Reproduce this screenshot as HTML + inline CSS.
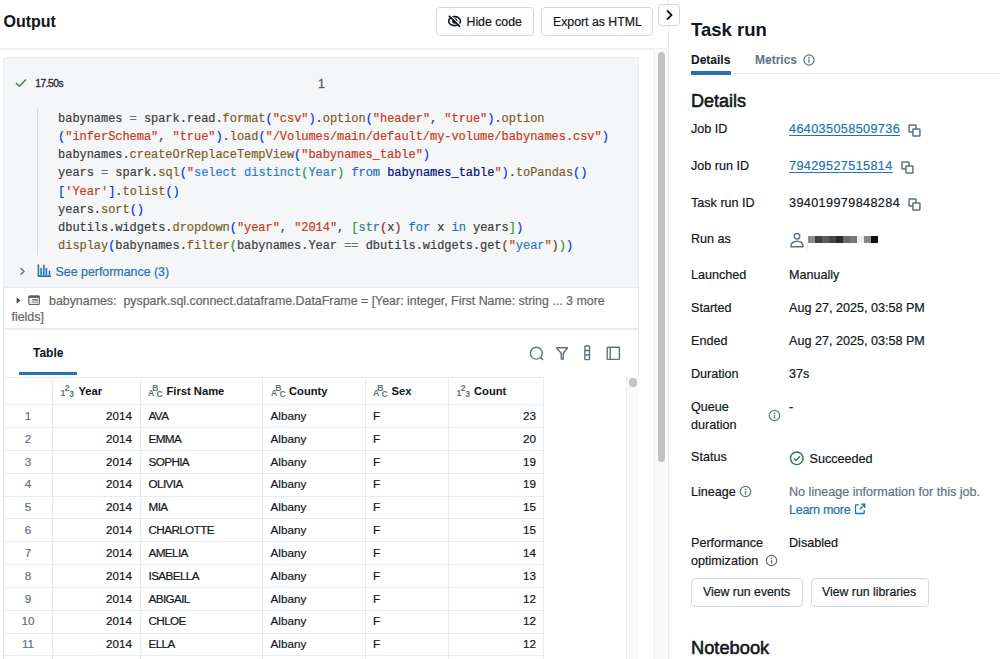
<!DOCTYPE html>
<html><head><meta charset="utf-8"><title>Task run</title>
<style>
html,body{margin:0;padding:0;background:#fff;}
body{width:1000px;height:659px;position:relative;overflow:hidden;font-family:"Liberation Sans", sans-serif;}
.t{position:absolute;white-space:nowrap;-webkit-text-stroke:0.2px currentColor;}
.r{position:absolute;display:block;}
pre.code{margin:0;font-family:"Liberation Mono", monospace;white-space:pre;}
</style></head><body>
<div class="t" style="left:3.5px;top:11.00px;font-size:16px;line-height:21px;color:#11171c;font-weight:700;-webkit-text-stroke:0.05px currentColor;">Output</div>
<div class="r" style="left:436px;top:7px;width:97.5px;height:29px;border:1px solid #d1d9e1;border-radius:4px;box-sizing:border-box;"></div>
<svg class="r" style="left:447px;top:15px;" width="16" height="13" viewBox="0 0 16 13"><ellipse cx="7.55" cy="6.15" rx="5.9" ry="4.5" fill="none" stroke="#11171c" stroke-width="1.6"/><circle cx="7.8" cy="6" r="2.7" fill="#11171c"/><path d="M3.6 0.6 L13.2 10" stroke="#fff" stroke-width="1.3"/><path d="M2.3 1.2 L12.7 11.4" stroke="#11171c" stroke-width="1.6" stroke-linecap="round"/></svg>
<div class="t" style="left:466.5px;top:14.00px;font-size:12.3px;line-height:16px;color:#11171c;">Hide code</div>
<div class="r" style="left:541px;top:7px;width:112px;height:29px;border:1px solid #d1d9e1;border-radius:4px;box-sizing:border-box;"></div>
<div class="t" style="left:553px;top:14.00px;font-size:12.3px;line-height:16px;color:#11171c;">Export as HTML</div>
<div class="r" style="left:0px;top:48px;width:668px;height:1.5px;background:#eef0f3;"></div>
<div class="r" style="left:668px;top:0px;width:1px;height:659px;background:#e8ecf0;"></div>
<div class="r" style="left:658px;top:4px;width:22px;height:22px;border:1px solid #d1d9e1;border-radius:4px;box-sizing:border-box;background:#fff;"></div>
<svg class="r" style="left:664px;top:9px;" width="10" height="12" viewBox="0 0 10 12"><path d="M3 1.5 L7.5 6 L3 10.5" fill="none" stroke="#11171c" stroke-width="1.8"/></svg>
<div class="r" style="left:654px;top:49px;width:14px;height:610px;background:#fafafa;border-left:1px solid #ededed;box-sizing:border-box;"></div>
<div class="r" style="left:658px;top:52px;width:7px;height:409.5px;background:#c1c1c1;border-radius:4px;"></div>
<div class="r" style="left:3px;top:57px;width:636px;height:231px;background:#f5f6f8;border-radius:4px 4px 0 0;border:1px solid #e9ecef;border-bottom:none;box-sizing:border-box;"></div>
<svg class="r" style="left:15px;top:78px;" width="12" height="10" viewBox="0 0 12 10"><path d="M1 5 L4.3 8.3 L11 1.5" fill="none" stroke="#2e8a4e" stroke-width="1.5"/></svg>
<div class="t" style="left:35.2px;top:76.60px;font-size:10.2px;line-height:13px;color:#2e2e2e;letter-spacing:-0.45px;-webkit-text-stroke:0.35px #2e2e2e;">17.50s</div>
<div class="t" style="left:318px;top:75.70px;font-size:12.2px;line-height:16px;color:#4a5b68;-webkit-text-stroke:0.3px currentColor;">1</div>
<div class="r" style="left:37px;top:109px;width:1px;height:146px;background:#d8d8d8;"></div>
<pre class="r code" style="left:58.1px;letter-spacing:-0.05px;-webkit-text-stroke-width:0.2px;top:109.58px;font-size:12px;line-height:18.25px;"><span style="color:#3c3c3c;-webkit-text-stroke-color:#3c3c3c">babynames </span><span style="color:#6e6e6e;-webkit-text-stroke-color:#6e6e6e">=</span><span style="color:#3c3c3c;-webkit-text-stroke-color:#3c3c3c"> spark.read.</span><span style="color:#795e26;-webkit-text-stroke-color:#795e26">format</span><span style="color:#0431fa;-webkit-text-stroke-color:#0431fa">(</span><span style="color:#c13c1c;-webkit-text-stroke-color:#c13c1c">&quot;csv&quot;</span><span style="color:#0431fa;-webkit-text-stroke-color:#0431fa">)</span><span style="color:#3c3c3c;-webkit-text-stroke-color:#3c3c3c">.</span><span style="color:#795e26;-webkit-text-stroke-color:#795e26">option</span><span style="color:#0431fa;-webkit-text-stroke-color:#0431fa">(</span><span style="color:#c13c1c;-webkit-text-stroke-color:#c13c1c">&quot;header&quot;</span><span style="color:#3c3c3c;-webkit-text-stroke-color:#3c3c3c">, </span><span style="color:#c13c1c;-webkit-text-stroke-color:#c13c1c">&quot;true&quot;</span><span style="color:#0431fa;-webkit-text-stroke-color:#0431fa">)</span><span style="color:#3c3c3c;-webkit-text-stroke-color:#3c3c3c">.</span><span style="color:#795e26;-webkit-text-stroke-color:#795e26">option</span>
<span style="color:#0431fa;-webkit-text-stroke-color:#0431fa">(</span><span style="color:#c13c1c;-webkit-text-stroke-color:#c13c1c">&quot;inferSchema&quot;</span><span style="color:#3c3c3c;-webkit-text-stroke-color:#3c3c3c">, </span><span style="color:#c13c1c;-webkit-text-stroke-color:#c13c1c">&quot;true&quot;</span><span style="color:#0431fa;-webkit-text-stroke-color:#0431fa">)</span><span style="color:#3c3c3c;-webkit-text-stroke-color:#3c3c3c">.</span><span style="color:#795e26;-webkit-text-stroke-color:#795e26">load</span><span style="color:#0431fa;-webkit-text-stroke-color:#0431fa">(</span><span style="color:#c13c1c;-webkit-text-stroke-color:#c13c1c">&quot;/Volumes/main/default/my-volume/babynames.csv&quot;</span><span style="color:#0431fa;-webkit-text-stroke-color:#0431fa">)</span>
<span style="color:#3c3c3c;-webkit-text-stroke-color:#3c3c3c">babynames.</span><span style="color:#795e26;-webkit-text-stroke-color:#795e26">createOrReplaceTempView</span><span style="color:#0431fa;-webkit-text-stroke-color:#0431fa">(</span><span style="color:#c13c1c;-webkit-text-stroke-color:#c13c1c">&quot;babynames_table&quot;</span><span style="color:#0431fa;-webkit-text-stroke-color:#0431fa">)</span>
<span style="color:#3c3c3c;-webkit-text-stroke-color:#3c3c3c">years </span><span style="color:#6e6e6e;-webkit-text-stroke-color:#6e6e6e">=</span><span style="color:#3c3c3c;-webkit-text-stroke-color:#3c3c3c"> spark.</span><span style="color:#795e26;-webkit-text-stroke-color:#795e26">sql</span><span style="color:#0431fa;-webkit-text-stroke-color:#0431fa">(</span><span style="color:#c13c1c;-webkit-text-stroke-color:#c13c1c">&quot;</span><span style="color:#2a7dc4;-webkit-text-stroke-color:#2a7dc4">select distinct</span><span style="color:#319331;-webkit-text-stroke-color:#319331">(</span><span style="color:#2a7dc4;-webkit-text-stroke-color:#2a7dc4">Year</span><span style="color:#319331;-webkit-text-stroke-color:#319331">)</span><span style="color:#3c3c3c;-webkit-text-stroke-color:#3c3c3c"> </span><span style="color:#1b6cb8;-webkit-text-stroke-color:#1b6cb8">from</span><span style="color:#3c3c3c;-webkit-text-stroke-color:#3c3c3c"> </span><span style="color:#001080;-webkit-text-stroke-color:#001080">babynames_table</span><span style="color:#c13c1c;-webkit-text-stroke-color:#c13c1c">&quot;</span><span style="color:#0431fa;-webkit-text-stroke-color:#0431fa">)</span><span style="color:#3c3c3c;-webkit-text-stroke-color:#3c3c3c">.</span><span style="color:#795e26;-webkit-text-stroke-color:#795e26">toPandas</span><span style="color:#0431fa;-webkit-text-stroke-color:#0431fa">()</span>
<span style="color:#0431fa;-webkit-text-stroke-color:#0431fa">[</span><span style="color:#c13c1c;-webkit-text-stroke-color:#c13c1c">&#x27;Year&#x27;</span><span style="color:#0431fa;-webkit-text-stroke-color:#0431fa">]</span><span style="color:#3c3c3c;-webkit-text-stroke-color:#3c3c3c">.</span><span style="color:#795e26;-webkit-text-stroke-color:#795e26">tolist</span><span style="color:#0431fa;-webkit-text-stroke-color:#0431fa">()</span>
<span style="color:#3c3c3c;-webkit-text-stroke-color:#3c3c3c">years.</span><span style="color:#795e26;-webkit-text-stroke-color:#795e26">sort</span><span style="color:#0431fa;-webkit-text-stroke-color:#0431fa">()</span>
<span style="color:#3c3c3c;-webkit-text-stroke-color:#3c3c3c">dbutils.widgets.</span><span style="color:#795e26;-webkit-text-stroke-color:#795e26">dropdown</span><span style="color:#0431fa;-webkit-text-stroke-color:#0431fa">(</span><span style="color:#c13c1c;-webkit-text-stroke-color:#c13c1c">&quot;year&quot;</span><span style="color:#3c3c3c;-webkit-text-stroke-color:#3c3c3c">, </span><span style="color:#c13c1c;-webkit-text-stroke-color:#c13c1c">&quot;2014&quot;</span><span style="color:#3c3c3c;-webkit-text-stroke-color:#3c3c3c">, </span><span style="color:#319331;-webkit-text-stroke-color:#319331">[</span><span style="color:#267f99;-webkit-text-stroke-color:#267f99">str</span><span style="color:#7b3814;-webkit-text-stroke-color:#7b3814">(</span><span style="color:#3c3c3c;-webkit-text-stroke-color:#3c3c3c">x</span><span style="color:#7b3814;-webkit-text-stroke-color:#7b3814">)</span><span style="color:#3c3c3c;-webkit-text-stroke-color:#3c3c3c"> </span><span style="color:#1f70c1;-webkit-text-stroke-color:#1f70c1">for</span><span style="color:#3c3c3c;-webkit-text-stroke-color:#3c3c3c"> x </span><span style="color:#1f70c1;-webkit-text-stroke-color:#1f70c1">in</span><span style="color:#3c3c3c;-webkit-text-stroke-color:#3c3c3c"> years</span><span style="color:#319331;-webkit-text-stroke-color:#319331">]</span><span style="color:#0431fa;-webkit-text-stroke-color:#0431fa">)</span>
<span style="color:#795e26;-webkit-text-stroke-color:#795e26">display</span><span style="color:#0431fa;-webkit-text-stroke-color:#0431fa">(</span><span style="color:#3c3c3c;-webkit-text-stroke-color:#3c3c3c">babynames.</span><span style="color:#795e26;-webkit-text-stroke-color:#795e26">filter</span><span style="color:#319331;-webkit-text-stroke-color:#319331">(</span><span style="color:#3c3c3c;-webkit-text-stroke-color:#3c3c3c">babynames.Year </span><span style="color:#6e6e6e;-webkit-text-stroke-color:#6e6e6e">==</span><span style="color:#3c3c3c;-webkit-text-stroke-color:#3c3c3c"> dbutils.widgets.get</span><span style="color:#7b3814;-webkit-text-stroke-color:#7b3814">(</span><span style="color:#c13c1c;-webkit-text-stroke-color:#c13c1c">&quot;</span><span style="color:#2a7dc4;-webkit-text-stroke-color:#2a7dc4">year</span><span style="color:#c13c1c;-webkit-text-stroke-color:#c13c1c">&quot;</span><span style="color:#7b3814;-webkit-text-stroke-color:#7b3814">)</span><span style="color:#319331;-webkit-text-stroke-color:#319331">)</span><span style="color:#0431fa;-webkit-text-stroke-color:#0431fa">)</span>
</pre>
<svg class="r" style="left:19px;top:267px;" width="7" height="9" viewBox="0 0 7 9"><path d="M1.5 1.2 L5 4.5 L1.5 7.8" fill="none" stroke="#5f7281" stroke-width="1.4"/></svg>
<svg class="r" style="left:37px;top:264px;" width="15" height="15" viewBox="0 0 15 15"><path d="M1.4 1 V12.1 H13.4" fill="none" stroke="#2272b4" stroke-width="1.6" stroke-linecap="round" stroke-linejoin="round"/><path d="M4.1 4.5 V10.4 M6.9 1.2 V10.4 M9.4 4.5 V10.4 M12.5 7.3 V10.4" fill="none" stroke="#2272b4" stroke-width="1.6" stroke-linecap="round"/></svg>
<div class="t" style="left:55.5px;top:263.90px;font-size:12.4px;line-height:16px;color:#2272b4;">See performance (3)</div>
<div class="r" style="left:3px;top:287px;width:636px;height:372px;background:#fff;border-left:1px solid #e3e8ed;border-right:1px solid #e3e8ed;box-sizing:border-box;"></div>
<div class="r" style="left:3px;top:287px;width:636px;height:1px;background:#e8ebef;"></div>
<svg class="r" style="left:16px;top:297px;" width="6" height="8" viewBox="0 0 6 8"><path d="M0.6 0.2 L4.5 3.5 L0.6 6.8 Z" fill="#4a4a4a"/></svg>
<svg class="r" style="left:28px;top:295px;" width="12" height="10" viewBox="0 0 12 10"><rect x="0.8" y="0.9" width="10.6" height="8.6" rx="1.2" fill="#f3f3f3" stroke="#666" stroke-width="1.2"/><rect x="0.8" y="0.9" width="10.6" height="2" fill="#5a5a5a"/><rect x="4.2" y="4" width="6" height="4.3" fill="#b4b4b4"/><path d="M4.2 4.5 H10.2" stroke="#7c7c7c" stroke-width="1"/><path d="M2.4 4 V8.3" stroke="#cfcfcf" stroke-width="0.8"/></svg>
<div class="t" style="left:49px;top:292.80px;font-size:12.4px;line-height:16px;color:#666;">babynames:&nbsp;&nbsp;pyspark.sql.connect.dataframe.DataFrame = [Year: integer, First Name: string ... 3 more</div>
<div class="t" style="left:11.5px;top:309.30px;font-size:12.4px;line-height:16px;color:#666;">fields]</div>
<div class="r" style="left:3px;top:328px;width:636px;height:2px;background:#e7ecf0;"></div>
<div class="t" style="left:33px;top:345.00px;font-size:12px;line-height:16px;color:#11171c;font-weight:700;-webkit-text-stroke:0.05px currentColor;">Table</div>
<div class="r" style="left:18.5px;top:371.5px;width:58.5px;height:3.5px;background:#2272b4;"></div>
<svg class="r" style="left:529px;top:346px;" width="16" height="16" viewBox="0 0 16 16"><circle cx="7.3" cy="7.2" r="5.9" fill="none" stroke="#5f7281" stroke-width="1.4"/><path d="M11.5 11.4 L14.2 14" stroke="#5f7281" stroke-width="1.5"/></svg>
<svg class="r" style="left:555px;top:346px;" width="15" height="15" viewBox="0 0 15 15"><path d="M1.5 1.8 H12.5 L8.3 7.2 V13 H6.2 V7.2 Z" fill="none" stroke="#5f7281" stroke-width="1.4" stroke-linejoin="round"/></svg>
<svg class="r" style="left:584px;top:345px;" width="7" height="16" viewBox="0 0 7 16"><rect x="0.9" y="1" width="4.6" height="13.6" rx="0.6" fill="none" stroke="#5f7281" stroke-width="1.4"/><path d="M0.9 5.5 H5.5 M0.9 10 H5.5" stroke="#5f7281" stroke-width="1.4"/></svg>
<svg class="r" style="left:606px;top:346px;" width="15" height="15" viewBox="0 0 15 15"><rect x="1.2" y="1.2" width="12.2" height="12.2" rx="0.6" fill="none" stroke="#5f7281" stroke-width="1.4"/><path d="M4.2 1.2 V13.4" stroke="#5f7281" stroke-width="1.4"/></svg>
<div class="r" style="left:3px;top:377px;width:541.5px;height:1px;background:#e8ecf0;"></div>
<div class="r" style="left:3px;top:404.2px;width:541.5px;height:1px;background:#e8ecf0;"></div>
<div class="r" style="left:3px;top:427.03px;width:541.5px;height:1px;background:#e8ecf0;"></div>
<div class="r" style="left:3px;top:449.86px;width:541.5px;height:1px;background:#e8ecf0;"></div>
<div class="r" style="left:3px;top:472.69px;width:541.5px;height:1px;background:#e8ecf0;"></div>
<div class="r" style="left:3px;top:495.52px;width:541.5px;height:1px;background:#e8ecf0;"></div>
<div class="r" style="left:3px;top:518.35px;width:541.5px;height:1px;background:#e8ecf0;"></div>
<div class="r" style="left:3px;top:541.18px;width:541.5px;height:1px;background:#e8ecf0;"></div>
<div class="r" style="left:3px;top:564.01px;width:541.5px;height:1px;background:#e8ecf0;"></div>
<div class="r" style="left:3px;top:586.84px;width:541.5px;height:1px;background:#e8ecf0;"></div>
<div class="r" style="left:3px;top:609.67px;width:541.5px;height:1px;background:#e8ecf0;"></div>
<div class="r" style="left:3px;top:632.5px;width:541.5px;height:1px;background:#e8ecf0;"></div>
<div class="r" style="left:3px;top:655.33px;width:541.5px;height:1px;background:#e8ecf0;"></div>
<div class="r" style="left:51.5px;top:377px;width:1px;height:282px;background:#e8ecf0;"></div>
<div class="r" style="left:140.0px;top:377px;width:1px;height:282px;background:#e8ecf0;"></div>
<div class="r" style="left:262.0px;top:377px;width:1px;height:282px;background:#e8ecf0;"></div>
<div class="r" style="left:364.7px;top:377px;width:1px;height:282px;background:#e8ecf0;"></div>
<div class="r" style="left:447.5px;top:377px;width:1px;height:282px;background:#e8ecf0;"></div>
<div class="r" style="left:543.4px;top:377px;width:1px;height:282px;background:#e8ecf0;"></div>
<div class="r" style="left:625.5px;top:377px;width:13.5px;height:282px;background:#f9f9f9;border-left:1px solid #ececec;box-sizing:border-box;"></div>
<div class="r" style="left:628.5px;top:378px;width:8px;height:9px;background:#c4c4c4;border-radius:4px;"></div>
<svg class="r" style="left:59.5px;top:384px;" width="16" height="15" viewBox="0 0 16 15"><g font-family="Liberation Sans" font-weight="700" font-size="8.6" fill="#5f7281" text-anchor="middle"><text x="3" y="11.75">1</text><text x="7.25" y="6.5">2</text><text x="11.6" y="13.25">3</text></g></svg>
<div class="t" style="left:78.5px;top:384.00px;font-size:11.2px;line-height:15px;color:#11171c;font-weight:700;-webkit-text-stroke:0.05px currentColor;">Year</div>
<svg class="r" style="left:148px;top:384px;" width="16" height="15" viewBox="0 0 16 15"><g font-family="Liberation Sans" font-weight="700" font-size="8.6" fill="#5f7281" text-anchor="middle"><text x="3" y="11.5">A</text><text x="7.25" y="6.75">B</text><text x="11.5" y="13">C</text></g></svg>
<div class="t" style="left:166.5px;top:384.00px;font-size:11.2px;line-height:15px;color:#11171c;font-weight:700;-webkit-text-stroke:0.05px currentColor;">First Name</div>
<svg class="r" style="left:270.5px;top:384px;" width="16" height="15" viewBox="0 0 16 15"><g font-family="Liberation Sans" font-weight="700" font-size="8.6" fill="#5f7281" text-anchor="middle"><text x="3" y="11.5">A</text><text x="7.25" y="6.75">B</text><text x="11.5" y="13">C</text></g></svg>
<div class="t" style="left:289px;top:384.00px;font-size:11.2px;line-height:15px;color:#11171c;font-weight:700;-webkit-text-stroke:0.05px currentColor;">County</div>
<svg class="r" style="left:373px;top:384px;" width="16" height="15" viewBox="0 0 16 15"><g font-family="Liberation Sans" font-weight="700" font-size="8.6" fill="#5f7281" text-anchor="middle"><text x="3" y="11.5">A</text><text x="7.25" y="6.75">B</text><text x="11.5" y="13">C</text></g></svg>
<div class="t" style="left:391.5px;top:384.00px;font-size:11.2px;line-height:15px;color:#11171c;font-weight:700;-webkit-text-stroke:0.05px currentColor;">Sex</div>
<svg class="r" style="left:456px;top:384px;" width="16" height="15" viewBox="0 0 16 15"><g font-family="Liberation Sans" font-weight="700" font-size="8.6" fill="#5f7281" text-anchor="middle"><text x="3" y="11.75">1</text><text x="7.25" y="6.5">2</text><text x="11.6" y="13.25">3</text></g></svg>
<div class="t" style="left:474px;top:384.00px;font-size:11.2px;line-height:15px;color:#11171c;font-weight:700;-webkit-text-stroke:0.05px currentColor;">Count</div>
<div class="t" style="left:0px;top:408.00px;font-size:11.7px;line-height:15px;color:#5f7281;width:56px;text-align:center;">1</div>
<div class="t" style="right:868px;top:408.00px;font-size:11.7px;line-height:15px;color:#11171c;">2014</div>
<div class="t" style="left:148.5px;top:408.00px;font-size:11.7px;line-height:15px;color:#11171c;letter-spacing:-0.6px;">AVA</div>
<div class="t" style="left:270.5px;top:408.00px;font-size:11.7px;line-height:15px;color:#11171c;">Albany</div>
<div class="t" style="left:373px;top:408.00px;font-size:11.7px;line-height:15px;color:#11171c;">F</div>
<div class="t" style="right:464px;top:408.00px;font-size:11.7px;line-height:15px;color:#11171c;">23</div>
<div class="t" style="left:0px;top:430.83px;font-size:11.7px;line-height:15px;color:#5f7281;width:56px;text-align:center;">2</div>
<div class="t" style="right:868px;top:430.83px;font-size:11.7px;line-height:15px;color:#11171c;">2014</div>
<div class="t" style="left:148.5px;top:430.83px;font-size:11.7px;line-height:15px;color:#11171c;letter-spacing:-0.6px;">EMMA</div>
<div class="t" style="left:270.5px;top:430.83px;font-size:11.7px;line-height:15px;color:#11171c;">Albany</div>
<div class="t" style="left:373px;top:430.83px;font-size:11.7px;line-height:15px;color:#11171c;">F</div>
<div class="t" style="right:464px;top:430.83px;font-size:11.7px;line-height:15px;color:#11171c;">20</div>
<div class="t" style="left:0px;top:453.66px;font-size:11.7px;line-height:15px;color:#5f7281;width:56px;text-align:center;">3</div>
<div class="t" style="right:868px;top:453.66px;font-size:11.7px;line-height:15px;color:#11171c;">2014</div>
<div class="t" style="left:148.5px;top:453.66px;font-size:11.7px;line-height:15px;color:#11171c;letter-spacing:-0.6px;">SOPHIA</div>
<div class="t" style="left:270.5px;top:453.66px;font-size:11.7px;line-height:15px;color:#11171c;">Albany</div>
<div class="t" style="left:373px;top:453.66px;font-size:11.7px;line-height:15px;color:#11171c;">F</div>
<div class="t" style="right:464px;top:453.66px;font-size:11.7px;line-height:15px;color:#11171c;">19</div>
<div class="t" style="left:0px;top:476.49px;font-size:11.7px;line-height:15px;color:#5f7281;width:56px;text-align:center;">4</div>
<div class="t" style="right:868px;top:476.49px;font-size:11.7px;line-height:15px;color:#11171c;">2014</div>
<div class="t" style="left:148.5px;top:476.49px;font-size:11.7px;line-height:15px;color:#11171c;letter-spacing:-0.6px;">OLIVIA</div>
<div class="t" style="left:270.5px;top:476.49px;font-size:11.7px;line-height:15px;color:#11171c;">Albany</div>
<div class="t" style="left:373px;top:476.49px;font-size:11.7px;line-height:15px;color:#11171c;">F</div>
<div class="t" style="right:464px;top:476.49px;font-size:11.7px;line-height:15px;color:#11171c;">19</div>
<div class="t" style="left:0px;top:499.32px;font-size:11.7px;line-height:15px;color:#5f7281;width:56px;text-align:center;">5</div>
<div class="t" style="right:868px;top:499.32px;font-size:11.7px;line-height:15px;color:#11171c;">2014</div>
<div class="t" style="left:148.5px;top:499.32px;font-size:11.7px;line-height:15px;color:#11171c;letter-spacing:-0.6px;">MIA</div>
<div class="t" style="left:270.5px;top:499.32px;font-size:11.7px;line-height:15px;color:#11171c;">Albany</div>
<div class="t" style="left:373px;top:499.32px;font-size:11.7px;line-height:15px;color:#11171c;">F</div>
<div class="t" style="right:464px;top:499.32px;font-size:11.7px;line-height:15px;color:#11171c;">15</div>
<div class="t" style="left:0px;top:522.15px;font-size:11.7px;line-height:15px;color:#5f7281;width:56px;text-align:center;">6</div>
<div class="t" style="right:868px;top:522.15px;font-size:11.7px;line-height:15px;color:#11171c;">2014</div>
<div class="t" style="left:148.5px;top:522.15px;font-size:11.7px;line-height:15px;color:#11171c;letter-spacing:-0.6px;">CHARLOTTE</div>
<div class="t" style="left:270.5px;top:522.15px;font-size:11.7px;line-height:15px;color:#11171c;">Albany</div>
<div class="t" style="left:373px;top:522.15px;font-size:11.7px;line-height:15px;color:#11171c;">F</div>
<div class="t" style="right:464px;top:522.15px;font-size:11.7px;line-height:15px;color:#11171c;">15</div>
<div class="t" style="left:0px;top:544.98px;font-size:11.7px;line-height:15px;color:#5f7281;width:56px;text-align:center;">7</div>
<div class="t" style="right:868px;top:544.98px;font-size:11.7px;line-height:15px;color:#11171c;">2014</div>
<div class="t" style="left:148.5px;top:544.98px;font-size:11.7px;line-height:15px;color:#11171c;letter-spacing:-0.6px;">AMELIA</div>
<div class="t" style="left:270.5px;top:544.98px;font-size:11.7px;line-height:15px;color:#11171c;">Albany</div>
<div class="t" style="left:373px;top:544.98px;font-size:11.7px;line-height:15px;color:#11171c;">F</div>
<div class="t" style="right:464px;top:544.98px;font-size:11.7px;line-height:15px;color:#11171c;">14</div>
<div class="t" style="left:0px;top:567.81px;font-size:11.7px;line-height:15px;color:#5f7281;width:56px;text-align:center;">8</div>
<div class="t" style="right:868px;top:567.81px;font-size:11.7px;line-height:15px;color:#11171c;">2014</div>
<div class="t" style="left:148.5px;top:567.81px;font-size:11.7px;line-height:15px;color:#11171c;letter-spacing:-0.6px;">ISABELLA</div>
<div class="t" style="left:270.5px;top:567.81px;font-size:11.7px;line-height:15px;color:#11171c;">Albany</div>
<div class="t" style="left:373px;top:567.81px;font-size:11.7px;line-height:15px;color:#11171c;">F</div>
<div class="t" style="right:464px;top:567.81px;font-size:11.7px;line-height:15px;color:#11171c;">13</div>
<div class="t" style="left:0px;top:590.64px;font-size:11.7px;line-height:15px;color:#5f7281;width:56px;text-align:center;">9</div>
<div class="t" style="right:868px;top:590.64px;font-size:11.7px;line-height:15px;color:#11171c;">2014</div>
<div class="t" style="left:148.5px;top:590.64px;font-size:11.7px;line-height:15px;color:#11171c;letter-spacing:-0.6px;">ABIGAIL</div>
<div class="t" style="left:270.5px;top:590.64px;font-size:11.7px;line-height:15px;color:#11171c;">Albany</div>
<div class="t" style="left:373px;top:590.64px;font-size:11.7px;line-height:15px;color:#11171c;">F</div>
<div class="t" style="right:464px;top:590.64px;font-size:11.7px;line-height:15px;color:#11171c;">12</div>
<div class="t" style="left:0px;top:613.47px;font-size:11.7px;line-height:15px;color:#5f7281;width:56px;text-align:center;">10</div>
<div class="t" style="right:868px;top:613.47px;font-size:11.7px;line-height:15px;color:#11171c;">2014</div>
<div class="t" style="left:148.5px;top:613.47px;font-size:11.7px;line-height:15px;color:#11171c;letter-spacing:-0.6px;">CHLOE</div>
<div class="t" style="left:270.5px;top:613.47px;font-size:11.7px;line-height:15px;color:#11171c;">Albany</div>
<div class="t" style="left:373px;top:613.47px;font-size:11.7px;line-height:15px;color:#11171c;">F</div>
<div class="t" style="right:464px;top:613.47px;font-size:11.7px;line-height:15px;color:#11171c;">12</div>
<div class="t" style="left:0px;top:636.30px;font-size:11.7px;line-height:15px;color:#5f7281;width:56px;text-align:center;">11</div>
<div class="t" style="right:868px;top:636.30px;font-size:11.7px;line-height:15px;color:#11171c;">2014</div>
<div class="t" style="left:148.5px;top:636.30px;font-size:11.7px;line-height:15px;color:#11171c;letter-spacing:-0.6px;">ELLA</div>
<div class="t" style="left:270.5px;top:636.30px;font-size:11.7px;line-height:15px;color:#11171c;">Albany</div>
<div class="t" style="left:373px;top:636.30px;font-size:11.7px;line-height:15px;color:#11171c;">F</div>
<div class="t" style="right:464px;top:636.30px;font-size:11.7px;line-height:15px;color:#11171c;">12</div>
<div class="t" style="left:691px;top:17.50px;font-size:18.5px;line-height:24px;color:#11171c;font-weight:700;-webkit-text-stroke:0.05px currentColor;">Task run</div>
<div class="t" style="left:691px;top:52.20px;font-size:12px;line-height:16px;color:#11171c;font-weight:700;-webkit-text-stroke:0.05px currentColor;">Details</div>
<div class="t" style="left:755px;top:52.20px;font-size:12px;line-height:16px;color:#5f7281;font-weight:700;-webkit-text-stroke:0.05px currentColor;">Metrics</div>
<svg class="r" style="left:801.8px;top:52.8px;" width="14" height="14" viewBox="0 0 14 14"><circle cx="7" cy="7" r="5.05" fill="none" stroke="#5f7281" stroke-width="1.25"/><circle cx="7" cy="4.7" r="0.85" fill="#5f7281"/><path d="M7 6.3 V9.7" stroke="#5f7281" stroke-width="1.3"/></svg>
<div class="r" style="left:691px;top:73px;width:309px;height:1px;background:#e8ecf0;"></div>
<div class="r" style="left:691px;top:71.3px;width:40px;height:3.3px;background:#2272b4;"></div>
<div class="t" style="left:691px;top:89.50px;font-size:18px;line-height:23px;color:#11171c;-webkit-text-stroke:0.55px #11171c;">Details</div>
<div class="t" style="left:691px;top:121.30px;font-size:12.6px;line-height:16px;color:#11171c;">Job ID</div>
<div class="t" style="left:691px;top:157.80px;font-size:12.6px;line-height:16px;color:#11171c;">Job run ID</div>
<div class="t" style="left:691px;top:194.60px;font-size:12.6px;line-height:16px;color:#11171c;">Task run ID</div>
<div class="t" style="left:691px;top:231.00px;font-size:12.6px;line-height:16px;color:#11171c;">Run as</div>
<div class="t" style="left:691px;top:267.40px;font-size:12.6px;line-height:16px;color:#11171c;">Launched</div>
<div class="t" style="left:691px;top:300.40px;font-size:12.6px;line-height:16px;color:#11171c;">Started</div>
<div class="t" style="left:691px;top:333.20px;font-size:12.6px;line-height:16px;color:#11171c;">Ended</div>
<div class="t" style="left:691px;top:366.20px;font-size:12.6px;line-height:16px;color:#11171c;">Duration</div>
<div class="t" style="left:789px;top:121.30px;font-size:12.6px;line-height:16px;color:#2272b4;letter-spacing:0.4px;text-decoration:underline;text-underline-offset:2px;">464035058509736</div>
<svg class="r" style="left:907px;top:123px;" width="15" height="15" viewBox="0 0 15 15"><rect x="2" y="2" width="7" height="7" rx="0.6" fill="none" stroke="#5f7281" stroke-width="1.5"/><rect x="5.9" y="6" width="7" height="7" rx="0.6" fill="#fff" stroke="#5f7281" stroke-width="1.5"/></svg>
<div class="t" style="left:789px;top:157.80px;font-size:12.6px;line-height:16px;color:#2272b4;letter-spacing:0.4px;text-decoration:underline;text-underline-offset:2px;">79429527515814</div>
<svg class="r" style="left:899.7px;top:159.7px;" width="15" height="15" viewBox="0 0 15 15"><rect x="2" y="2" width="7" height="7" rx="0.6" fill="none" stroke="#5f7281" stroke-width="1.5"/><rect x="5.9" y="6" width="7" height="7" rx="0.6" fill="#fff" stroke="#5f7281" stroke-width="1.5"/></svg>
<div class="t" style="left:789px;top:194.60px;font-size:12.6px;line-height:16px;color:#11171c;letter-spacing:0.4px;">394019979848284</div>
<svg class="r" style="left:907.1px;top:196.6px;" width="15" height="15" viewBox="0 0 15 15"><rect x="2" y="2" width="7" height="7" rx="0.6" fill="none" stroke="#5f7281" stroke-width="1.5"/><rect x="5.9" y="6" width="7" height="7" rx="0.6" fill="#fff" stroke="#5f7281" stroke-width="1.5"/></svg>
<svg class="r" style="left:789px;top:232px;" width="17" height="17" viewBox="0 0 17 17"><circle cx="8" cy="4.3" r="2.8" fill="none" stroke="#5f7281" stroke-width="1.4"/><path d="M1.8 14.8 C2 10.5 5 9.3 8 9.3 C11 9.3 14 10.5 14.2 14.8 Z" fill="none" stroke="#5f7281" stroke-width="1.4" stroke-linejoin="round"/></svg>
<div class="r" style="left:808px;top:236px;width:7px;height:7px;background:#8a8c8e;"></div>
<div class="r" style="left:815px;top:236px;width:7px;height:7px;background:#3d4144;"></div>
<div class="r" style="left:822px;top:236px;width:7px;height:7px;background:#5a5e61;"></div>
<div class="r" style="left:829px;top:236px;width:7px;height:7px;background:#44484b;"></div>
<div class="r" style="left:836px;top:236px;width:7px;height:7px;background:#272b2e;"></div>
<div class="r" style="left:843px;top:236px;width:7px;height:7px;background:#6a6d70;"></div>
<div class="r" style="left:850px;top:236px;width:7px;height:7px;background:#76797b;"></div>
<div class="r" style="left:857px;top:236px;width:7px;height:7px;background:#eeeeee;"></div>
<div class="r" style="left:864px;top:236px;width:7px;height:7px;background:#85878a;"></div>
<div class="r" style="left:871px;top:236px;width:7px;height:7px;background:#0d1117;"></div>
<div class="r" style="left:807px;top:243px;width:1px;height:6px;background:#dde3e8;"></div>
<div class="t" style="left:789px;top:267.40px;font-size:12.6px;line-height:16px;color:#11171c;">Manually</div>
<div class="t" style="left:789px;top:300.40px;font-size:12.6px;line-height:16px;color:#11171c;">Aug 27, 2025, 03:58 PM</div>
<div class="t" style="left:789px;top:333.20px;font-size:12.6px;line-height:16px;color:#11171c;">Aug 27, 2025, 03:58 PM</div>
<div class="t" style="left:789px;top:366.20px;font-size:12.6px;line-height:16px;color:#11171c;">37s</div>
<div class="t" style="left:691px;top:399.00px;font-size:12.6px;line-height:16px;color:#11171c;">Queue</div>
<div class="t" style="left:691px;top:417.20px;font-size:12.6px;line-height:16px;color:#11171c;">duration</div>
<svg class="r" style="left:767.9px;top:408.7px;" width="13" height="13" viewBox="0 0 13 13"><circle cx="6.5" cy="6.5" r="5.2" fill="none" stroke="#5f7281" stroke-width="1.2"/><circle cx="6.5" cy="4.3" r="0.85" fill="#5f7281"/><path d="M6.5 6 V9.6" stroke="#5f7281" stroke-width="1.3"/></svg>
<div class="t" style="left:789px;top:399.00px;font-size:12.6px;line-height:16px;color:#11171c;">-</div>
<div class="t" style="left:691px;top:449.40px;font-size:12.6px;line-height:16px;color:#11171c;">Status</div>
<svg class="r" style="left:789.2px;top:449.6px;" width="16" height="16" viewBox="0 0 16 16"><circle cx="7.8" cy="8.3" r="6.3" fill="none" stroke="#277c43" stroke-width="1.4"/><path d="M4.8 8.4 L7 10.6 L10.9 6.3" fill="none" stroke="#277c43" stroke-width="1.4"/></svg>
<div class="t" style="left:809.5px;top:450.50px;font-size:12.6px;line-height:16px;color:#11171c;">Succeeded</div>
<div class="t" style="left:691px;top:483.90px;font-size:12.6px;line-height:16px;color:#11171c;">Lineage</div>
<svg class="r" style="left:739.3px;top:484.9px;" width="13" height="13" viewBox="0 0 13 13"><circle cx="6.5" cy="6.5" r="5.2" fill="none" stroke="#5f7281" stroke-width="1.2"/><circle cx="6.5" cy="4.3" r="0.85" fill="#5f7281"/><path d="M6.5 6 V9.6" stroke="#5f7281" stroke-width="1.3"/></svg>
<div class="t" style="left:789px;top:483.90px;font-size:12.6px;line-height:16px;color:#5f7281;">No lineage information for this job.</div>
<div class="t" style="left:789px;top:501.80px;font-size:12.6px;line-height:16px;color:#2272b4;letter-spacing:-0.3px;">Learn more</div>
<svg class="r" style="left:854px;top:503px;" width="12" height="12" viewBox="0 0 12 12"><path d="M5 1.8 H2.2 A0.7 0.7 0 0 0 1.5 2.5 V9.8 A0.7 0.7 0 0 0 2.2 10.5 H9.5 A0.7 0.7 0 0 0 10.2 9.8 V7" fill="none" stroke="#2272b4" stroke-width="1.3"/><path d="M7 1.2 H10.8 V5 M10.8 1.2 L5.8 6.2" fill="none" stroke="#2272b4" stroke-width="1.3"/></svg>
<div class="t" style="left:691px;top:534.60px;font-size:12.6px;line-height:16px;color:#11171c;">Performance</div>
<div class="t" style="left:691px;top:552.80px;font-size:12.6px;line-height:16px;color:#11171c;">optimization</div>
<svg class="r" style="left:765.1px;top:553.5px;" width="13" height="13" viewBox="0 0 13 13"><circle cx="6.5" cy="6.5" r="5.2" fill="none" stroke="#5f7281" stroke-width="1.2"/><circle cx="6.5" cy="4.3" r="0.85" fill="#5f7281"/><path d="M6.5 6 V9.6" stroke="#5f7281" stroke-width="1.3"/></svg>
<div class="t" style="left:789px;top:534.60px;font-size:12.6px;line-height:16px;color:#11171c;">Disabled</div>
<div class="r" style="left:691px;top:577.5px;width:111.5px;height:29px;border:1px solid #d1d9e1;border-radius:4px;box-sizing:border-box;"></div>
<div class="t" style="left:703px;top:584.20px;font-size:12.3px;line-height:16px;color:#11171c;">View run events</div>
<div class="r" style="left:810.5px;top:577.5px;width:118.5px;height:29px;border:1px solid #d1d9e1;border-radius:4px;box-sizing:border-box;"></div>
<div class="t" style="left:822px;top:584.20px;font-size:12.3px;line-height:16px;color:#11171c;">View run libraries</div>
<div class="t" style="left:691px;top:635.50px;font-size:18.3px;line-height:24px;color:#11171c;-webkit-text-stroke:0.55px #11171c;">Notebook</div>
</body></html>
